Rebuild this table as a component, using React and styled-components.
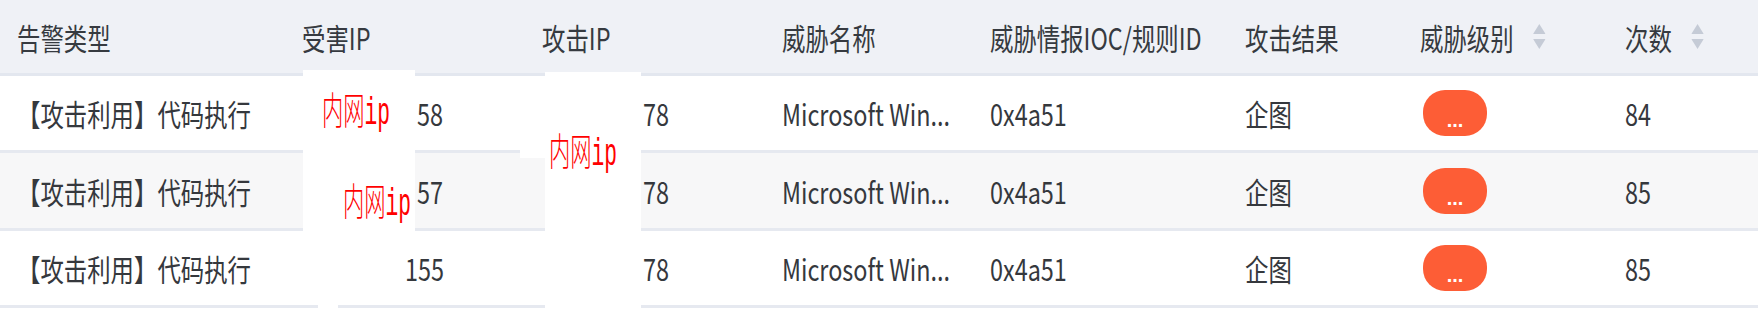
import React from 'react';
import styled, { createGlobalStyle } from 'styled-components';

const Global = createGlobalStyle`
  html, body { margin: 0; padding: 0; background: #ffffff; }
  body { font-family: "Noto Sans CJK SC", "Noto Sans", sans-serif; }
`;

const COLS = '285px 240px 240px 208px 255px 175px 205px 1fr';

const Page = styled.div`
  position: relative;
  width: 1758px;
  height: 322px;
  overflow: hidden;
  background: #ffffff;
`;

const Table = styled.div`
  display: flex;
  flex-direction: column;
`;

const HeadRow = styled.div`
  display: grid;
  grid-template-columns: ${COLS};
  height: 76px;
  box-sizing: border-box;
  background: #eff1f6;
  border-bottom: 3px solid #e3e7ef;
`;

const Row = styled.div`
  display: grid;
  grid-template-columns: ${COLS};
  height: ${(p) => p.$h || 77}px;
  box-sizing: border-box;
  background: ${(p) => (p.$striped ? '#f7f7f8' : '#ffffff')};
  border-bottom: 3px solid #e6e9f0;
`;

const Cell = styled.div`
  display: flex;
  align-items: center;
  padding-left: 17px;
  min-width: 0;
  overflow: hidden;
`;

const Label = styled.span`
  display: inline-flex;
  align-items: center;
  font-size: 30px;
  line-height: 36px;
  color: #35383d;
  white-space: nowrap;
  transform: scaleX(0.78);
  transform-origin: left center;
  margin-left: ${(p) => p.$offset || 0}px;
`;

const HeadLabel = styled(Label)`
  color: #363a40;
`;

const SortIcon = styled.svg`
  margin-left: 25px;
  flex: none;
`;

const Badge = styled.div`
  width: 64px;
  height: 46px;
  margin-left: 3px;
  border-radius: 22px;
  background: #fd5d36;
  display: flex;
  align-items: flex-end;
  justify-content: center;
  box-sizing: border-box;
  padding-bottom: 6px;
  color: #ffffff;
  font-family: "Liberation Sans", sans-serif;
  font-weight: bold;
  font-size: 20px;
  line-height: 1;
`;

const Redact = styled.div`
  position: absolute;
  background: #ffffff;
  left: ${(p) => p.$x}px;
  top: ${(p) => p.$y}px;
  width: ${(p) => p.$w}px;
  height: ${(p) => p.$h}px;
`;

const Mark = styled.span`
  position: absolute;
  left: ${(p) => p.$x}px;
  top: ${(p) => p.$y}px;
  font-family: "Liberation Mono", "Noto Sans CJK SC", monospace;
  font-weight: 300;
  font-size: 38px;
  line-height: 1;
  color: #ff0000;
  white-space: nowrap;
  transform: scaleX(0.56);
  transform-origin: left top;
`;

const Sorter = () => (
  <SortIcon width="16" height="25" viewBox="0 0 16 25" preserveAspectRatio="none">
    <polygon points="8,0 16,10 0,10" fill="#c5cbd6" />
    <polygon points="0,15 16,15 8,25" fill="#c5cbd6" />
  </SortIcon>
);

const headers = [
  { t: '告警类型' },
  { t: '受害IP' },
  { t: '攻击IP' },
  { t: '威胁名称' },
  { t: '威胁情报IOC/规则ID' },
  { t: '攻击结果' },
  { t: '威胁级别', sort: true },
  { t: '次数', sort: true },
];

const rows = [
  { victim: '58', vOff: 115, attacker: '78', count: '84', h: 77 },
  { victim: '57', vOff: 115, attacker: '78', count: '85', h: 78 },
  { victim: '155', vOff: 103, attacker: '78', count: '85', h: 77 },
];

export default function App() {
  return (
    <Page>
      <Global />
      <Table>
        <HeadRow>
          {headers.map((h) => (
            <Cell key={h.t}>
              <HeadLabel>
                {h.t}
                {h.sort && <Sorter />}
              </HeadLabel>
            </Cell>
          ))}
        </HeadRow>
        {rows.map((r, i) => (
          <Row key={i} $striped={i === 1} $h={r.h}>
            <Cell>
              <Label>【攻击利用】代码执行</Label>
            </Cell>
            <Cell>
              <Label $offset={r.vOff}>{r.victim}</Label>
            </Cell>
            <Cell>
              <Label $offset={101}>{r.attacker}</Label>
            </Cell>
            <Cell>
              <Label>Microsoft Win...</Label>
            </Cell>
            <Cell>
              <Label>0x4a51</Label>
            </Cell>
            <Cell>
              <Label>企图</Label>
            </Cell>
            <Cell>
              <Badge>...</Badge>
            </Cell>
            <Cell>
              <Label>{r.count}</Label>
            </Cell>
          </Row>
        ))}
      </Table>

      <Redact $x={303} $y={70} $w={112} $h={164} />
      <Redact $x={318} $y={300} $w={20} $h={12} />
      <Redact $x={545} $y={72} $w={96} $h={241} />
      <Redact $x={520} $y={148} $w={26} $h={10} />

      <Mark $x={322} $y={95}>内网ip</Mark>
      <Mark $x={343} $y={186}>内网ip</Mark>
      <Mark $x={549} $y={136}>内网ip</Mark>
    </Page>
  );
}
